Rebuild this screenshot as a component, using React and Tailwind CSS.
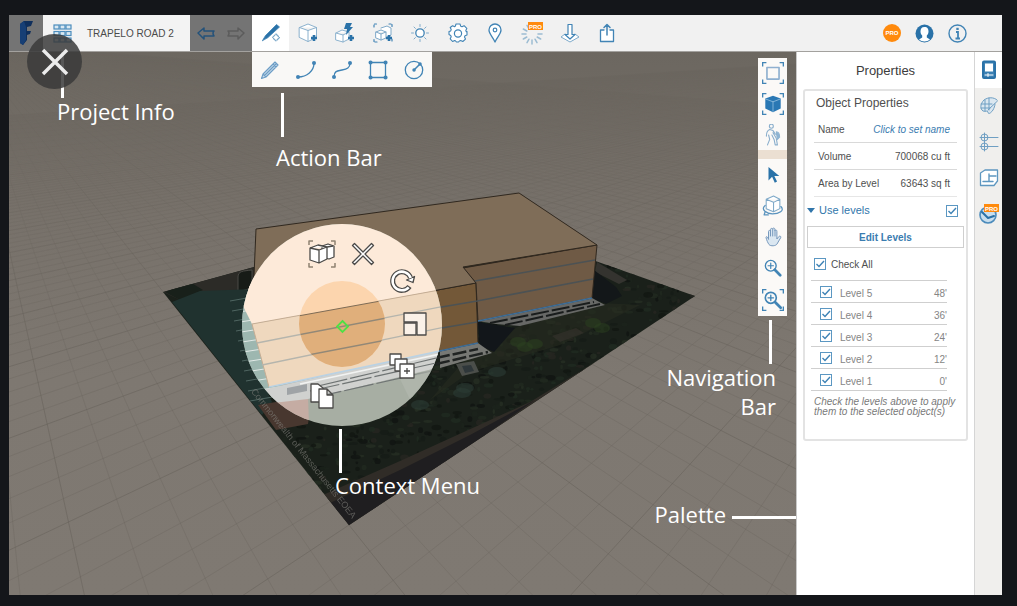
import React from 'react';

const LEVELS = [
  { name: 'Level 5', height: "48'" },
  { name: 'Level 4', height: "36'" },
  { name: 'Level 3', height: "24'" },
  { name: 'Level 2', height: "12'" },
  { name: 'Level 1', height: "0'" },
];

/* ---------- Icons ---------- */

const Icon = ({ size = 20, children, className = '' }) => (
  <svg
    width={size}
    height={size}
    viewBox="0 0 20 20"
    fill="none"
    stroke="currentColor"
    strokeLinecap="round"
    strokeLinejoin="round"
    className={className}
    aria-hidden="true"
  >
    {children}
  </svg>
);

const Corners = () => (
  <path d="M0 4V0h4M16 0h4v4M20 16v4h-4M4 20H0v-4" strokeWidth="2.400" strokeLinecap="butt" />
);

const Plus = ({ x, y }) => (
  <path d={`M${x - 3} ${y}h6M${x} ${y - 3}v6`} strokeWidth="2.6" strokeLinecap="butt" stroke="#2a72a8" />
);

const GridIcon = () => (
  <svg width="19" height="19" viewBox="0 0 19 19" fill="#d9e8f2" stroke="#4c8dbd" strokeWidth="1.2" aria-hidden="true">
    {[1, 7.5, 14].map((y) =>
      [1, 7, 13].map((x) => <rect key={`${x}-${y}`} x={x} y={y} width="5" height="4" />)
    )}
  </svg>
);

const ArrowIcon = ({ flip }) => (
  <svg width="19" height="13" viewBox="0 0 19 13" fill="none" stroke="currentColor" strokeWidth="1.5" strokeLinejoin="round" aria-hidden="true">
    <path d={flip ? 'M18 6 12 1v3H2q2 2 0 5h10v3z' : 'M1 6l6-5v3h10q-2 2 0 5H7v3z'} />
  </svg>
);

const SketchIcon = () => (
  <Icon>
    <path d="M1.500 17.500 4.500 12.500 15.500 1.500 18.500 4 7 14.500z" fill="#2a72a8" strokeWidth=".8" />
    <path d="M15 11l3.500 3.500L15 18l-3.500-3.500z" strokeWidth="1.2" strokeDasharray="3.500 1.500" stroke="#7fabcb" />
  </Icon>
);

const PrimitiveIcon = () => (
  <Icon>
    <path d="M1.500 4.500 10 1l8.500 3.500v10L10 18.500 1.500 14.500zM1.500 4.500 10 7.500l8.500-3M10 7.500v11" fill="#fff" stroke="#8cb2ce" />
    <Plus x={16} y={15} />
  </Icon>
);

const QuickIcon = () => (
  <Icon>
    <path d="M1 10l6-3 7 2v7l-6 3-7-2zM1 10l7 2 6-3M8 12v7" fill="#fff" stroke="#8cb2ce" />
    <path d="M11 0h6l-2 4h3l-7 8 1-6H9z" fill="#2a72a8" stroke="none" />
    <Plus x={16} y={15} />
  </Icon>
);

const GroupIcon = () => (
  <Icon>
    <path d="M1 4V1h3M16 1h3v3M19 16v3M4 19H1v-3" strokeWidth="1.200" strokeDasharray="2 1.500" />
    <path d="M8 5l6-2 4 2v7l-4 2M3 9l5-2 5 2v6l-5 2-5-2zM3 9l5 2 5-2M8 11v6" fill="#fff" stroke="#7fa9c8" />
    <Plus x={16} y={15} />
  </Icon>
);

const SunIcon = () => (
  <Icon>
    <circle cx="10" cy="10" r="4.200" fill="#fff" strokeWidth="1.300" />
    <path d="M10 1.500v2M10 16.500v2M1.500 10h2M16.500 10h2M4 4l1.400 1.400M14.600 14.600 16 16M4 16l1.400-1.400M14.600 5.400 16 4" stroke="#7fabcb" />
  </Icon>
);

// Gear rim: eight rounded lobes around the hub
const GearIcon = () => (
  <Icon>
    <path
      d="M8 1h4l.7 2.200 1.300.5 2.100-1 2.700 2.700-1 2.100.5 1.300L19 8.500v3.500l-.7.200-1.300.5-.5 1.300 1 2.100-2.700 2.400-2.100-1-1.300.5L10.500 19H8.500l-.9-1-.9-.5-2.100 1-2.400-2.700 1-2.100-.5-1.300L1 11.500v-3l1.700-.6.5-1.300-1-2.100L4.600 2.700l2.100 1L7.400 3z"
      fill="#fff"
      strokeWidth="1.100"
    />
    <circle cx="10" cy="10.500" r="3.600" strokeWidth="1.200" />
  </Icon>
);

const PinIcon = () => (
  <Icon>
    <path d="M10 19C8 14 4 11 4 7a6 6 0 0 1 12 0c0 4-4 7-6 12z" fill="#fff" strokeWidth="1.300" />
    <circle cx="10" cy="7" r="1.800" strokeWidth="1.200" />
  </Icon>
);

const ProTag = ({ x, y }) => (
  <g stroke="none">
    <rect x={x} y={y} width="15" height="8" fill="#ff8a0d" />
    <text x={x + 7.5} y={y + 6.5} fontSize="6" fontWeight="700" fill="#fff" textAnchor="middle" fontFamily="Liberation Sans, sans-serif">
      PRO
    </text>
  </g>
);

const EnergyIcon = () => (
  <Icon className="overflow-visible">
    {[30, 60, 90, 120, 150, 180, 210, 240, 270].map((a) => (
      <path key={a} d="M16 11h4" transform={`rotate(${a - 30} 10 11)`} stroke="#9cbcd2" strokeWidth="1.500" />
    ))}
    <ProTag x={6} y={-1} />
  </Icon>
);

const ImportIcon = () => (
  <Icon>
    <path d="M5 11l-4 3 9 5 9-5-4-3" fill="#fff" stroke="#7fabcb" />
    <path d="M8 1.500h4v10h3l-5 4.500-5-4.500h3z" fill="#fff" strokeWidth="1.200" />
  </Icon>
);

const ShareIcon = () => (
  <Icon>
    <path d="M7 7H3.500v11.500h13V7H13" fill="#fff" strokeWidth="1.300" />
    <path d="M10 12V2M7 4.500 10 1.500l3 3" strokeWidth="1.500" />
  </Icon>
);

const PencilIcon = () => (
  <Icon>
    <path d="M1.500 18.500 3 14 15 2l3 3L6 17zM3 14l3 3M13 4l3 3M4.500 15.500l12-12" fill="#c9dcea" stroke="#6c9dc6" strokeWidth="1.100" />
  </Icon>
);

const ArcIcon = () => (
  <Icon>
    <path d="M2 17c9 0 16-6 16-14" strokeWidth="1.300" />
    <circle cx="2" cy="17" r="2" fill="currentColor" stroke="none" />
    <circle cx="18" cy="3" r="2" fill="currentColor" stroke="none" />
  </Icon>
);

const SplineIcon = () => (
  <Icon>
    <path d="M2 17c0-6 3-6 8-7s8-2 8-7" strokeWidth="1.300" />
    <circle cx="2" cy="17" r="2" fill="currentColor" stroke="none" />
    <circle cx="18" cy="3" r="2" fill="currentColor" stroke="none" />
  </Icon>
);

const RectIcon = () => (
  <Icon>
    <rect x="2.500" y="2.500" width="15" height="15" strokeWidth="1.300" />
    <path d="M2.500 2.500h.1M17.500 2.500h.1M2.500 17.500h.1M17.500 17.500h.1" strokeWidth="4" />
  </Icon>
);

const CircleIcon = () => (
  <Icon>
    <circle cx="10" cy="10" r="8.700" strokeWidth="1.300" />
    <path d="M10 10l6-6" strokeWidth="1.500" />
    <path d="M10 10h.1M16 4h.1" strokeWidth="3.400" />
  </Icon>
);

const SelectBoxIcon = () => (
  <Icon size={22}>
    <Corners />
    <rect x="4.500" y="5" width="11" height="10.500" stroke="#8fb0d0" strokeWidth="1.500" />
  </Icon>
);

const OrbitCubeIcon = () => (
  <Icon size={22}>
    <Corners />
    <path d="M10 2.500l7 2.500v9l-7 3.500L3 14V5z" fill="#2a78b4" stroke="none" />
    <path d="M3.500 5.500 10 8l6.500-2.500M10 8v9" stroke="#8bbbdd" strokeWidth=".8" />
  </Icon>
);

const WalkIcon = () => (
  <Icon size={22}>
    <circle cx="8.500" cy="2" r="1.800" stroke="#8aaecc" />
    <path d="M7 5c-3 1-3 4-3 6M7 5l3 1 2 3 3 1M6 10l1 4-2 5M9 10l2 4 1 5h2l-1-6-3-5" stroke="#8aaecc" />
    <path d="M13 7c2 0 3 2 3 5l-2 2z" fill="#8fb4d2" stroke="#8fb4d2" />
  </Icon>
);

const CursorIcon = () => (
  <Icon size={18}>
    <path d="M5 1v15l4-4 3 6.500 2.500-1.300-3-6H17z" fill="#2a72a8" stroke="none" />
  </Icon>
);

const TurntableIcon = () => (
  <Icon size={21}>
    <path d="M4 4l7-3 6 3v9l-6 3-7-3zM4 4l7 3 6-3M11 7v9" fill="#fff" stroke="#7fa9c8" />
    <path d="M3 10c-5 4 2 8 7 8 6 0 12-3 8-7M3 16l-1 3 4 0" strokeWidth="1.200" stroke="#5a93be" />
  </Icon>
);

const HandIcon = () => (
  <Icon size={20}>
    <path
      d="M5.500 12V4.500c0-1.500 2-1.500 2 0V2.500c0-1.500 2.200-1.500 2.200 0V2c0-1.500 2.200-1.300 2.200.5V4c0-1.500 2-1.300 2 .3V12l2-2.500c1-1 2.500 0 1.800 1.200L14 17c-1 2-6.500 2.500-8 .5-1-1.400-2.500-4.500-3-7 0-1.500 1.600-1 2.500 1.500zM7.500 4.500V9M9.700 3v6M12 4v5"
      fill="#dbe7f1"
      stroke="#7899bd"
    />
  </Icon>
);

const ZoomIcon = () => (
  <Icon size={18}>
    <circle cx="7.500" cy="7.500" r="6" strokeWidth="1.500" />
    <path d="M4.500 7.500h6M7.500 4.500v6" strokeWidth="1.300" />
    <path d="M12 12l6 6" strokeWidth="3" />
  </Icon>
);

const ZoomFitIcon = () => (
  <Icon size={22}>
    <Corners />
    <circle cx="8" cy="8" r="5" strokeWidth="1.500" />
    <path d="M5.500 8h5M8 5.500v5" strokeWidth="1.200" />
    <path d="M12 12l5 5" strokeWidth="2.500" />
  </Icon>
);

const PropertiesTabIcon = () => (
  <Icon>
    <rect x="4" y="1.500" width="12" height="16.500" rx="1" strokeWidth="2" fill="#3b80b3" stroke="#2a72a8" />
    <rect x="6" y="3.500" width="8" height="8" fill="#fff" stroke="none" />
    <path d="M6 15h8M9 13.500v3" stroke="#fff" strokeWidth="1" />
  </Icon>
);

const MaterialsTabIcon = () => (
  <Icon>
    <path d="M18 4c-3-3-9-3-13 0-4 4-4 9-1 11 3 1 4-1 5 1 0 3 3 1 5-2 1-2 2-4 2-6" fill="#dbe7f0" stroke="#6f9fc3" />
    <path d="M2 8h11M2 12h9M6 4v11M10 2v12M9 14 18.500 5" stroke="#6f9fc3" />
  </Icon>
);

const LayersTabIcon = () => (
  <Icon>
    <g stroke="#6f9fc3">
      <circle cx="5.500" cy="5.500" r="3.500" />
      <circle cx="5.500" cy="14.500" r="3.500" />
      <path d="M1 5.500h18M1 14.500h18M5.500 1v18" />
    </g>
  </Icon>
);

const LibraryTabIcon = () => (
  <Icon>
    <path d="M1.500 5 6 2h12.500v11L15 17.500H1.500z" fill="#fff" stroke="#5e97c0" strokeWidth="1.300" />
    <path d="M4 13.500h6V8h7M10 13.500l4 0M10 6v2" stroke="#5e97c0" strokeWidth="1.400" />
  </Icon>
);

const AnalysisTabIcon = () => (
  <Icon className="overflow-visible">
    <circle cx="9" cy="11" r="8" stroke="#4b8bbb" strokeWidth="1.600" fill="#c9deed" />
    <path d="M3 8l6 6 6-2" stroke="#2a72a8" strokeWidth="2" />
    <ProTag x={5} y={0} />
  </Icon>
);

const TOOLS = [
  ['Primitives', PrimitiveIcon],
  ['Advanced modeling', QuickIcon],
  ['Group', GroupIcon],
  ['Sun and shadows', SunIcon],
  ['Settings', GearIcon],
  ['Location', PinIcon],
  ['Energy analysis', EnergyIcon],
  ['Import', ImportIcon],
  ['Export', ShareIcon],
];

const SKETCH_TOOLS = [
  ['Line', PencilIcon],
  ['Arc', ArcIcon],
  ['Spline', SplineIcon],
  ['Rectangle', RectIcon],
  ['Circle', CircleIcon],
];

const PALETTE_TABS = [
  ['Materials', MaterialsTabIcon],
  ['Layers', LayersTabIcon],
  ['Content library', LibraryTabIcon],
  ['Analysis', AnalysisTabIcon],
];

/* ---------- 3D scene ---------- */

// Ground plane: near corner of the site and the two vanishing points
const ORIGIN = [349, 525];
const VP_RIGHT = [1071, 46];
const VP_LEFT = [-36, 42];
const STEP = 0.055;

const gridLine = (i, vpAlong, scale, vpTo) => {
  const k = i * STEP * scale;
  const w = 1 + k || 0.001;
  const px = (ORIGIN[0] + k * vpAlong[0]) / w;
  const py = (ORIGIN[1] + k * vpAlong[1]) / w;
  const len = Math.hypot(px - vpTo[0], py - vpTo[1]);
  const dx = ((px - vpTo[0]) / len) * 2500;
  const dy = ((py - vpTo[1]) / len) * 2500;
  return { x1: vpTo[0] - dx, y1: vpTo[1] - dy, x2: vpTo[0] + dx, y2: vpTo[1] + dy };
};

const GRID = [];
for (let i = -90; i <= 110; i += 1) {
  const major = i % 5 === 0;
  GRID.push({ id: `u${i}`, major, ...gridLine(i, VP_RIGHT, 0.92, VP_LEFT) });
  GRID.push({ id: `v${i}`, major, ...gridLine(i, VP_LEFT, 0.935, VP_RIGHT) });
}

// Tree canopy, seeded so every render gives the same site
let seed = 11;
const rand = () => {
  seed = (seed * 16807) % 2147483647;
  return seed / 2147483647;
};
const TREE_COLORS = ['#121711', '#1b231b', '#20291f', '#151b17', '#262e23', '#101412', '#1f2a20', '#262521'];
const TREES = Array.from({ length: 1700 }, (_, i) => ({
  id: i,
  cx: 270 + rand() * 425,
  cy: 262 + rand() * 250,
  rx: 1 + rand() * 4,
  ry: 1 + rand() * 2,
  fill: TREE_COLORS[Math.floor(rand() * TREE_COLORS.length)],
}));

const Scene = () => (
  <svg
    className="absolute inset-0 h-full w-full"
    viewBox="9 52 788 543"
    preserveAspectRatio="xMinYMin slice"
    aria-label="Massing model on its site"
  >
    <defs>
      <linearGradient id="ground" x1="0" y1="0" x2="0" y2="1">
        <stop offset="0" stopColor="#6c6760" />
        <stop offset=".3" stopColor="#77716a" />
        <stop offset=".6" stopColor="#7e7871" />
        <stop offset="1" stopColor="#7f7972" />
      </linearGradient>
      <linearGradient id="fade" x1="0" y1="0" x2="0" y2="1">
        <stop offset="0" stopColor="#fff" stopOpacity=".12" />
        <stop offset=".3" stopColor="#fff" stopOpacity=".6" />
        <stop offset=".6" stopColor="#fff" />
      </linearGradient>
      <mask id="gridMask" maskUnits="userSpaceOnUse" x="9" y="52" width="788" height="543">
        <rect x="9" y="52" width="788" height="543" fill="url(#fade)" />
      </mask>
      <clipPath id="site">
        <path d="M163 292 349 525 695 296 456 212z" />
      </clipPath>
      <clipPath id="disc">
        <ellipse cx="342" cy="325" rx="100" ry="101" />
      </clipPath>
      <clipPath id="hub">
        <circle cx="342" cy="324" r="43" />
      </clipPath>
    </defs>

    <rect x="9" y="52" width="788" height="543" fill="url(#ground)" />
    <g mask="url(#gridMask)" stroke="#5c5750">
      {GRID.map(({ id, major, ...line }) => (
        <line key={id} {...line} strokeWidth="1" opacity={major ? 0.36 : 0.2} />
      ))}
    </g>

    {/* Aerial photo of the site */}
    <g clipPath="url(#site)">
      <rect x="160" y="205" width="540" height="325" fill="#1a201a" />
      {TREES.map(({ id, ...tree }) => (
        <ellipse key={id} {...tree} opacity=".8" />
      ))}
      <path d="M163 292 195 280 256 265 256 295 180 300z" fill="#2c2b27" />
      <path d="M165 292 190 282 203 290 180 300z" fill="#18201a" />
      <path d="M238 277c0-6 5-6 14-7v18l-14 4z" fill="#171b17" stroke="#4b4a46" />
      <path d="M172 302 200 291 256 289 262 380 272 402 262 415z" fill="#20322f" />
      {[0, 1, 2, 3, 4, 5, 6, 7, 8, 9, 10].map((i) => (
        <path key={i} d={`M${230 + i * 2} ${301 + i * 10}l28-5`} stroke="#6f8883" strokeWidth="1" opacity=".6" />
      ))}
      <path d="M258 405 312 396 308 424 276 430z" fill="#48372f" />
      <path d="M478 345 520 326 600 303 640 305 560 345 470 372 430 400z" fill="#262c20" opacity=".6" />
      <path d="M597 262l30 18-8 4-24-12z" fill="#34332f" />
      <path d="M594 270 616 287 622 296 606 304 592 298z" fill="#131719" />
      <path d="M478 322 515 328 494 352 480 346z" fill="#12161a" />
      <path d="M478 321 592 298 605 305 520 326 496 324z" fill="#676866" />
      <path d="M490 323 594 302M505 325 600 304" stroke="#191c1c" strokeWidth="2" strokeDasharray="18 3" />
      <path d="M440 351 478 343 492 353 440 368z" fill="#777874" />
      <path d="M436 358 478 349M436 364 488 352" stroke="#202322" strokeWidth="2.5" strokeDasharray="14 3" />
      <path d="M456 364l18-3 5 11-17 4z" fill="#4b4e4a" />
      <path d="M462 366l9-1 3 6-9 2z" fill="#2f373a" />
      {[[525, 347], [535, 344], [593, 323], [602, 328], [518, 342]].map(([x, y]) => (
        <ellipse key={x} cx={x} cy={y} rx="8" ry="5" fill="#2b421f" opacity=".5" />
      ))}
      {[[465, 388], [497, 372], [420, 405], [462, 393]].map(([x, y]) => (
        <ellipse key={x} cx={x} cy={y} rx="9" ry="5" fill="#2c3c35" opacity=".6" />
      ))}
      <path d="M552 336l24-8 8 5-24 9z" fill="#33302b" opacity=".7" />
      <path d="M300 505 400 461 530 402 640 335 645 345 480 440 349 535z" fill="#302c27" />
      <path d="M330 503 400 470 470 435 535 400 349 530z" fill="#1f1e20" />
      <text
        x="352"
        y="519"
        transform="rotate(51.5 352 519)"
        textAnchor="end"
        fontSize="9"
        fontFamily="Liberation Sans, sans-serif"
        fill="#85847f"
        opacity=".6"
      >
        Commonwealth of Massachusetts EOEA
      </text>
    </g>

    {/* Building mass */}
    <g stroke="#30281f" strokeWidth="1" strokeLinejoin="round">
      <path d="M252 324 476 283 478 343 269 387z" fill="#735838" />
      <path d="M463 268 597 245 592 298 478 321 476 283z" fill="#6f5a45" />
      <path d="M256 229 519 193 597 245 463 267 476 283 252 324z" fill="#7f6d58" />
    </g>
    <path d="M475 281 595 260M477 301 593 279M430 309 477 301M430 330 477 322" stroke="#4c5254" strokeWidth="1.500" />
    <path d="M430 353 478 343M478 321 592 298" stroke="#3f6f99" strokeWidth="1.500" />

    {/* Context menu disc, tinting what lies under it */}
    <g clipPath="url(#disc)">
      <rect x="240" y="220" width="205" height="210" fill="#a7aea3" />
      <path d="M240 285h20l24 110-20 10h-24z" fill="#9db7b0" />
      {[0, 1, 2, 3, 4, 5, 6, 7, 8, 9].map((i) => (
        <path key={i} d={`M${238 + i} ${302 + i * 10}l32-5`} stroke="#e1e9e6" strokeWidth="1" />
      ))}
      <path d="M262 402 308 396 309 425 270 430z" fill="#c5aca3" />
      <path d="M262 390 445 348 445 366 308 399 264 404z" fill="#d0d1cf" />
      <path d="M287 388l20-4v7l-20 4z" fill="#9fa3a6" />
      <path d="M310 391 445 361M318 386 445 356M312 398 445 368" stroke="#6f7474" strokeWidth="1.200" strokeDasharray="30 3" />
      <path d="M300 384 445 353" stroke="#f2f3f2" strokeWidth="1.500" />
      <path d="M400 379 445 366V420H420z" fill="#b4b9b1" opacity=".6" />
      <path d="M240 220H445V289L252 324z" fill="#fdead9" />
      <path d="M240 220H258L252 324 240 300z" fill="#fdead9" />
      <path d="M252 324 445 289 445 350 269 387z" fill="#efd8be" />
      <path d="M252 324 445 289M252 324 269 387" stroke="#c5ad94" strokeWidth="1" />
      <path d="M257 343 445 306M262 365 445 327" stroke="#b5b5ad" strokeWidth="1.300" />
      <path d="M269 387 445 350" stroke="#bad2e4" strokeWidth="1.500" />
      <g clipPath="url(#hub)">
        <rect x="298" y="280" width="90" height="90" fill="#fcd5ae" />
        <path d="M298 316 386 300 386 370H298z" fill="#e0af7b" />
        <path d="M298 316 386 300" stroke="#7d6b55" />
        <path d="M298 335 386 318M298 357 386 340" stroke="#928877" strokeWidth="1.500" />
      </g>
    </g>
    <path d="M342.500 321l5.500 5.500-5.500 5.500-5.500-5.500z" fill="none" stroke="#4fe045" strokeWidth="1.800" />
  </svg>
);

/* ---------- Controls ---------- */

const ToolButton = ({ label, className = '', children }) => (
  <button type="button" aria-label={label} className={`flex items-center justify-center text-[#4184b5] ${className}`}>
    {children}
  </button>
);

const CheckBox = ({ id, label }) => (
  <span className="relative block size-[12px] shrink-0 text-[#3d82b5]">
    <input id={id} type="checkbox" defaultChecked aria-label={label} className="block size-[12px] appearance-none border border-[#5b97c2] bg-white" />
    <svg viewBox="0 0 12 12" className="pointer-events-none absolute inset-0" fill="none" stroke="currentColor" strokeWidth="1.400" aria-hidden="true">
      <path d="M2.500 6l2.500 2.500L10 3" />
    </svg>
  </span>
);

const DiscButton = ({ label, className, children }) => (
  <button type="button" aria-label={label} className={`absolute size-[28px] text-[#4b4a48] ${className}`}>
    <svg viewBox="0 0 28 28" fill="#fff" stroke="currentColor" strokeWidth="1.300" strokeLinejoin="round" aria-hidden="true">
      {children}
    </svg>
  </button>
);

const ContextMenu = () => (
  <div className="absolute left-[233px] top-[172px] size-[200px]">
    <DiscButton label="Group" className="left-[66px] top-[16px]">
      <path d="M1 5V1h4M23 1h4v4M27 23v4h-4M5 27H1v-4" fill="none" stroke="#8f8372" strokeWidth="1.500" />
      <path d="M14 6l6-2 6 2v11l-5 2-7-2z" />
      <path d="M2 8l8-3 9 2v12l-8 4-9-3zM2 8l9 2 8-3M11 10v13M19 7l6-1" />
    </DiscButton>
    <DiscButton label="Delete" className="left-[107px] top-[16px]">
      <path d="M3.500 5.500l2-2L14 12l8.500-8.500 2 2L16 14l8.500 8.500-2 2L14 16l-8.500 8.500-2-2L12 14z" />
    </DiscButton>
    <DiscButton label="Rotate" className="left-[146px] top-[43px]">
      <path d="M21.500 19.500A9.300 9.300 0 1 1 22.500 10.500" fill="none" strokeWidth="5" />
      <path d="M26.500 9.500 25 15.500 18.500 13z" />
      <path d="M20.700 20.300A9.300 9.300 0 1 1 22.700 11" fill="none" stroke="#fff" strokeWidth="2.500" />
    </DiscButton>
    <DiscButton label="Scale" className="left-[159px] top-[86px]">
      <path d="M3 3h22v22H16V12H3z" fill="#faf1e8" />
      <path d="M3 13h12v12H3z" fill="#faf1e8" />
    </DiscButton>
    <DiscButton label="Array" className="left-[146px] top-[128px]">
      <path d="M2 2h11v11H2z" />
      <path d="M7 7h12v12H7z" />
      <path d="M12 12h14v14H12z" />
      <path d="M19 16v6M16 19h6" />
    </DiscButton>
    <DiscButton label="Copy" className="left-[64px] top-[157px]">
      <path d="M5 3h7l5 4v14H5z" />
      <path d="M13 8h8l6 6v13H13zM21 8v6h6z" />
    </DiscButton>
  </div>
);

const Callout = ({ className, children }) => (
  <p className={`absolute font-['Open_Sans','Noto_Sans',sans-serif] text-[22px] leading-[29px] text-white ${className}`}>{children}</p>
);

const NavigationBar = () => (
  <nav aria-label="Navigation" className="absolute right-[9px] top-[6px] w-[29px] bg-[#fbf9f7]">
    <ToolButton label="Select box" className="h-[30px] w-full"><SelectBoxIcon /></ToolButton>
    <ToolButton label="Orbit" className="h-[31px] w-full"><OrbitCubeIcon /></ToolButton>
    <ToolButton label="Walk" className="h-[31px] w-full"><WalkIcon /></ToolButton>
    <div className="h-[9px] bg-[#ebdfd2]" />
    <ToolButton label="Select" className="h-[31px] w-full"><CursorIcon /></ToolButton>
    <ToolButton label="Turntable" className="h-[31px] w-full"><TurntableIcon /></ToolButton>
    <ToolButton label="Pan" className="h-[31px] w-full"><HandIcon /></ToolButton>
    <ToolButton label="Zoom" className="h-[31px] w-full"><ZoomIcon /></ToolButton>
    <ToolButton label="Zoom to fit" className="h-[33px] w-full"><ZoomFitIcon /></ToolButton>
  </nav>
);

const TopBar = () => (
  <header className="flex h-[37px] items-stretch border-b border-[#a3a19e] bg-[#f1f1f1]">
    <div className="flex w-[243px] bg-[#747474]">
      <div className="flex w-[34px] items-center justify-center">
        <svg width="16" height="26" viewBox="0 0 16 26" aria-hidden="true">
          <path d="M2 4 6 1h9l-2 5-4 1v4h4l-1 3-3 1v5l-4 5-3-2z" fill="#0f2f5c" />
          <path d="M2 4 6 1l2 6v13l-3 5-3-2z" fill="#173f75" />
        </svg>
      </div>
      <div className="flex w-[147px] items-center gap-[15px] bg-[#f3f3f3] pl-[10px]">
        <button type="button" aria-label="Projects"><GridIcon /></button>
        <span className="text-[10px] text-[#4a4a4a]">TRAPELO ROAD 2</span>
      </div>
      <div className="flex flex-1 items-center justify-center gap-[10px]">
        <button type="button" aria-label="Undo" className="text-[#24527a]"><ArrowIcon /></button>
        <button type="button" aria-label="Redo" className="text-[#5c5c5c]"><ArrowIcon flip /></button>
      </div>
    </div>
    <div className="grid w-[374px] grid-cols-10">
      <ToolButton label="Sketch" className="bg-white"><SketchIcon /></ToolButton>
      {TOOLS.map(([label, Glyph]) => (
        <ToolButton key={label} label={label}><Glyph /></ToolButton>
      ))}
    </div>
    <div className="ml-auto flex items-center gap-[14px] pr-[35px]">
      <button type="button" className="size-[18px] rounded-full bg-[#ff8a0d] text-[6px] font-bold leading-[18px] text-white">PRO</button>
      <button type="button" aria-label="Account">
        <svg width="19" height="19" viewBox="0 0 19 19" aria-hidden="true">
          <circle cx="9.500" cy="9.500" r="9" fill="#2a72a8" />
          <path d="M9.500 3c-3 0-4 2-4 4.500 0 2 .8 3 1.700 4v2L4 15.500c3 2.500 8 2.500 11 0l-3.200-2v-2c.9-1 1.700-2 1.700-4C13.500 5 12.500 3 9.500 3z" fill="#fff" />
        </svg>
      </button>
      <button type="button" aria-label="Help">
        <svg width="19" height="19" viewBox="0 0 19 19" fill="none" stroke="#4184b5" aria-hidden="true">
          <circle cx="9.500" cy="9.500" r="8.500" strokeWidth="1.400" />
          <path d="M8 8h2v6M7.500 14.500h4.500" strokeWidth="1.800" />
          <path d="M9.500 3.800v2.200" strokeWidth="2.400" />
        </svg>
      </button>
    </div>
  </header>
);

const PropertiesPanel = () => (
  <aside className="w-[178px] shrink-0 border-l border-[#c9c9c9] bg-white px-[6px] text-[10px] text-[#4f4f4f]">
    <h2 className="flex h-[37px] items-center justify-center text-[13px] text-[#3c3c3c]">Properties</h2>
    <section className="min-h-[352px] rounded-[3px] border-2 border-[#e3e3e3] px-[2px]">
      <h3 className="pl-[9px] pt-[4px] text-[12px] leading-[16px]">Object Properties</h3>
      <dl className="mx-[7px] mt-[5px]">
        <div className="flex h-[27px] items-center justify-between border-b border-[#d9d9d9] pl-[4px] pr-[7px]">
          <dt>Name</dt>
          <dd><a href="#name" className="italic text-[#3a7cb0]">Click to set name</a></dd>
        </div>
        <div className="flex h-[27px] items-center justify-between border-b border-[#d9d9d9] pl-[4px] pr-[7px]">
          <dt>Volume</dt>
          <dd>700068 cu ft</dd>
        </div>
        <div className="flex h-[27px] items-center justify-between border-b border-[#e6e6e6] pl-[4px] pr-[7px]">
          <dt>Area by Level</dt>
          <dd>63643 sq ft</dd>
        </div>
      </dl>
      <div className="mb-[2px] flex h-[27px] items-center pr-[6px] text-[#3176ab]">
        <svg width="8" height="5" viewBox="0 0 8 5" aria-hidden="true"><path d="M0 0h8L4 5z" fill="currentColor" /></svg>
        <label htmlFor="use-levels" className="ml-[4px] mr-auto text-[11px]">Use levels</label>
        <CheckBox id="use-levels" />
      </div>
      <button type="button" className="block h-[22px] w-full border border-[#cfcfcf] bg-white font-bold text-[#3a7cb0]">Edit Levels</button>
      <div className="flex h-[32px] items-center gap-[5px] pl-[7px]">
        <CheckBox id="check-all" />
        <label htmlFor="check-all">Check All</label>
      </div>
      <table className="ml-[4px] w-[136px] border-collapse text-[#858585]">
        <tbody>
          {LEVELS.map((level) => (
            <tr key={level.name} className="h-[22px] border-y border-[#cfcfcf]">
              <td className="w-[29px] pl-[9px]"><CheckBox label={level.name} /></td>
              <td className="pt-[3px]">{level.name}</td>
              <td className="pt-[3px] text-right">{level.height}</td>
            </tr>
          ))}
        </tbody>
      </table>
      <p className="whitespace-nowrap pl-[7px] pt-[6px] italic leading-[10px] text-[#7a7a7a]">
        Check the levels above to apply<br />them to the selected object(s)
      </p>
    </section>
  </aside>
);

const App = () => {
  return (
    <div className="flex min-h-screen flex-col bg-[#14161a] pb-[11px] pl-[9px] pr-[15px] pt-[15px] font-['Liberation_Sans',Arial,sans-serif]">
      <div className="relative flex flex-1 flex-col">
        <TopBar />
        <div className="flex flex-1">
          <main className="relative min-h-[500px] flex-1 overflow-hidden">
            <Scene />

            {/* Sketch tools drop below the active action */}
            <div className="absolute left-[243px] top-0 grid h-[35px] w-[180px] grid-cols-5 bg-[#f9f8f6]">
              {SKETCH_TOOLS.map(([label, Glyph]) => (
                <ToolButton key={label} label={label}><Glyph /></ToolButton>
              ))}
            </div>

            <NavigationBar />
            <ContextMenu />

            {/* Callouts */}
            <div className="absolute left-[52px] top-0 h-[46px] w-[3px] bg-white" />
            <Callout className="left-[48px] top-[45px]">Project Info</Callout>
            <div className="absolute left-[272px] top-[41px] h-[44px] w-[3px] bg-white" />
            <Callout className="left-[267px] top-[91px]">Action Bar</Callout>
            <div className="absolute right-[24px] top-[268px] h-[44px] w-[3px] bg-white" />
            <Callout className="right-[20px] top-[311px] text-right">Navigation<br />Bar</Callout>
            <div className="absolute left-[330px] top-[377px] h-[44px] w-[3px] bg-white" />
            <Callout className="left-[326px] top-[419px]">Context Menu</Callout>
            <div className="absolute right-0 top-[464px] h-[3px] w-[64px] bg-white" />
            <Callout className="right-[70px] top-[448px]">Palette</Callout>
          </main>

          <PropertiesPanel />

          <div className="flex w-[28px] shrink-0 flex-col border-l border-[#d5d5d5] bg-[#f0efed]">
            <ToolButton label="Properties" className="h-[36px] bg-white"><PropertiesTabIcon /></ToolButton>
            {PALETTE_TABS.map(([label, Glyph]) => (
              <ToolButton key={label} label={label} className="h-[36px]"><Glyph /></ToolButton>
            ))}
          </div>
        </div>

        {/* Close button floats over the corner */}
        <button type="button" aria-label="Close" className="absolute left-[18px] top-[19px] flex size-[55px] items-center justify-center rounded-full bg-[#3a3a3a]/85">
          <svg width="28" height="28" viewBox="0 0 28 28" stroke="#ececec" strokeWidth="3.500" aria-hidden="true">
            <path d="M2 2l24 24M26 2 2 26" />
          </svg>
        </button>
      </div>
    </div>
  );
};

export default App;
